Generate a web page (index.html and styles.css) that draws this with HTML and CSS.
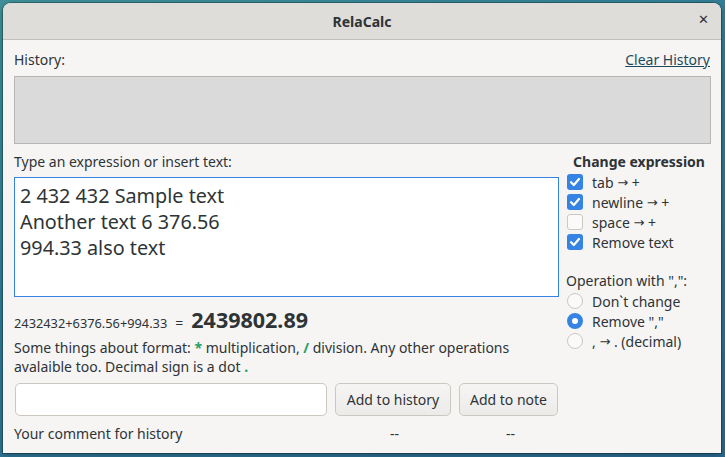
FILE: index.html
```html
<!DOCTYPE html>
<html>
<head>
<meta charset="utf-8">
<link rel="stylesheet" href="styles.css">
</head>
<body>
<div class="window">
  <div class="titlebar">
    <span class="title">RelaCalc</span>
    <span class="close">✕</span>
  </div>
  <div class="content">
    <div class="history-head">
      <span>History:</span>
      <a class="link">Clear History</a>
    </div>
    <div class="history-box"></div>
    <div class="main">
      <div class="left">
        <div class="label">Type an expression or insert text:</div>
        <div class="textarea">2 432 432 Sample text<br>Another text 6 376.56<br>994.33 also text</div>
        <div class="result">
          <span class="expr">2432432+6376.56+994.33</span>
          <span class="eq">=</span>
          <span class="value">2439802.89</span>
        </div>
        <div class="info">Some things about format: <span class="g">*</span> multiplication, <span class="g">/</span> division. Any other operations avalaible too. Decimal sign is a dot <span class="g">.</span></div>
        <div class="entry-row">
          <div class="entry"></div>
          <div class="btn btn-history">Add to history</div>
          <div class="btn btn-note">Add to note</div>
        </div>
        <div class="comment-row">
          <span class="comment">Your comment for history</span>
          <span class="dash d1">--</span>
          <span class="dash d2">--</span>
        </div>
      </div>
      <div class="right">
        <div class="heading">Change expression</div>
        <div class="opt"><span class="cb on"></span>tab <span class="arr">→</span> +</div>
        <div class="opt"><span class="cb"></span>newline <span class="arr">→</span> +</div>
        <div class="opt"><span class="cb off"></span>space <span class="arr">→</span> +</div>
        <div class="opt"><span class="cb on"></span>Remove text</div>
        <div class="sublabel">Operation with ",":</div>
        <div class="opt"><span class="rd"></span>Don`t change</div>
        <div class="opt"><span class="rd on"></span>Remove ","</div>
        <div class="opt"><span class="rd"></span>, <span class="arr">→</span> . (decimal)</div>
      </div>
    </div>
  </div>
</div>
</body>
</html>
```
FILE: styles.css
```css
html, body { margin: 0; padding: 0; }
body {
  width: 725px;
  height: 457px;
  overflow: hidden;
  background: linear-gradient(160deg, #3f9098 0%, #2f7a94 45%, #2a6890 100%);
  font-family: "Noto Sans", sans-serif;
  color: #2e3436;
  padding: 3px 0 0 3px;
  box-sizing: border-box;
}
.window {
  width: 718px;
  height: 450px;
  background: #f6f5f4;
  border-radius: 8px 8px 0 0;
  box-shadow: 0 0 0 1px rgba(0,0,0,0.25), 0 2px 6px rgba(0,0,0,0.3);
  overflow: hidden;
}
.titlebar {
  height: 36px;
  background: #deddda;
  border-bottom: 1px solid #c0bfbc;
  display: flex;
  align-items: center;
  justify-content: center;
  position: relative;
}
.title { font-weight: bold; font-size: 14px; color: #2e3436; }
.close {
  position: absolute;
  right: 12px;
  top: 9px;
  font-family: "DejaVu Sans", sans-serif;
  font-size: 13px;
  font-weight: bold;
  color: #2e3436;
}
.content {
  padding: 10px 10px 0 11px;
  font-size: 14px;
}
.history-head {
  display: flex;
  justify-content: space-between;
  height: 20px;
  line-height: 20px;
}
.link { color: #1c4a5c; text-decoration: underline; margin-right: 1px; }
.history-box {
  margin-top: 6px;
  height: 66px;
  background: #dadada;
  border: 1px solid #b6b6b6;
}
.main { display: flex; margin-top: 8px; }
.left { width: 545px; flex-shrink: 0; }
.label { line-height: 20px; height: 20px; }
.textarea {
  margin-top: 5px;
  height: 108px;
  border: 1px solid #3584e4;
  background: #fff;
  padding: 5px 5px;
  font-size: 19.8px;
  line-height: 26px;
  color: #2e3436;
}
.result { display: flex; align-items: baseline; margin-top: 8px; height: 26px; }
.expr { font-size: 12.8px; }
.eq { font-size: 14px; margin: 0 8px 0 8px; }
.value { font-size: 21.5px; font-weight: bold; }
.info { margin-top: 7px; line-height: 19px; }
.g { color: #26a269; font-weight: bold; }
.entry-row { display: flex; margin-top: 7px; gap: 8px; }
.entry {
  width: 310px;
  height: 31px;
  background: #fff;
  border: 1px solid #cdc7c2;
  border-radius: 5px;
  margin-left: 1px;
}
.btn {
  height: 31px;
  border: 1px solid #cdc7c2;
  border-radius: 5px;
  background: linear-gradient(#f6f5f4, #edebe9);
  display: flex;
  align-items: center;
  justify-content: center;
}
.btn-history { width: 114px; }
.btn-note { width: 97px; }
.comment-row { display: flex; margin-top: 8px; line-height: 20px; }
.comment { width: 376px; flex-shrink: 0; }
.dash { flex-shrink: 0; }
.d1 { width: 116px; }
.right { margin-left: 7px; padding-top: 0; }
.heading { font-weight: bold; text-align: center; width: 146px; height: 20px; line-height: 20px; }
.opt { display: flex; align-items: center; height: 20px; margin-left: 1px; white-space: pre; }
.arr { font-family: "DejaVu Sans", sans-serif; font-size: 13px; }
.sublabel { margin-top: 19px; height: 20px; line-height: 20px; }
.cb {
  width: 16px; height: 16px;
  border-radius: 3px;
  margin-right: 9px;
  box-sizing: border-box;
  background: #3584e4 url("data:image/svg+xml;utf8,<svg xmlns='http://www.w3.org/2000/svg' width='16' height='16'><path d='M4 8.2 L6.8 11 L12 5' fill='none' stroke='white' stroke-width='2.2' stroke-linecap='round' stroke-linejoin='round'/></svg>") no-repeat center;
}
.cb.off { background: #fafafa; border: 1px solid #cdc7c2; }
.rd {
  width: 16px; height: 16px;
  border-radius: 50%;
  margin-right: 9px;
  box-sizing: border-box;
  background: #fafafa;
  border: 1px solid #cdc7c2;
}
.rd.on { background: #fff; border: 5px solid #3584e4; }
```
